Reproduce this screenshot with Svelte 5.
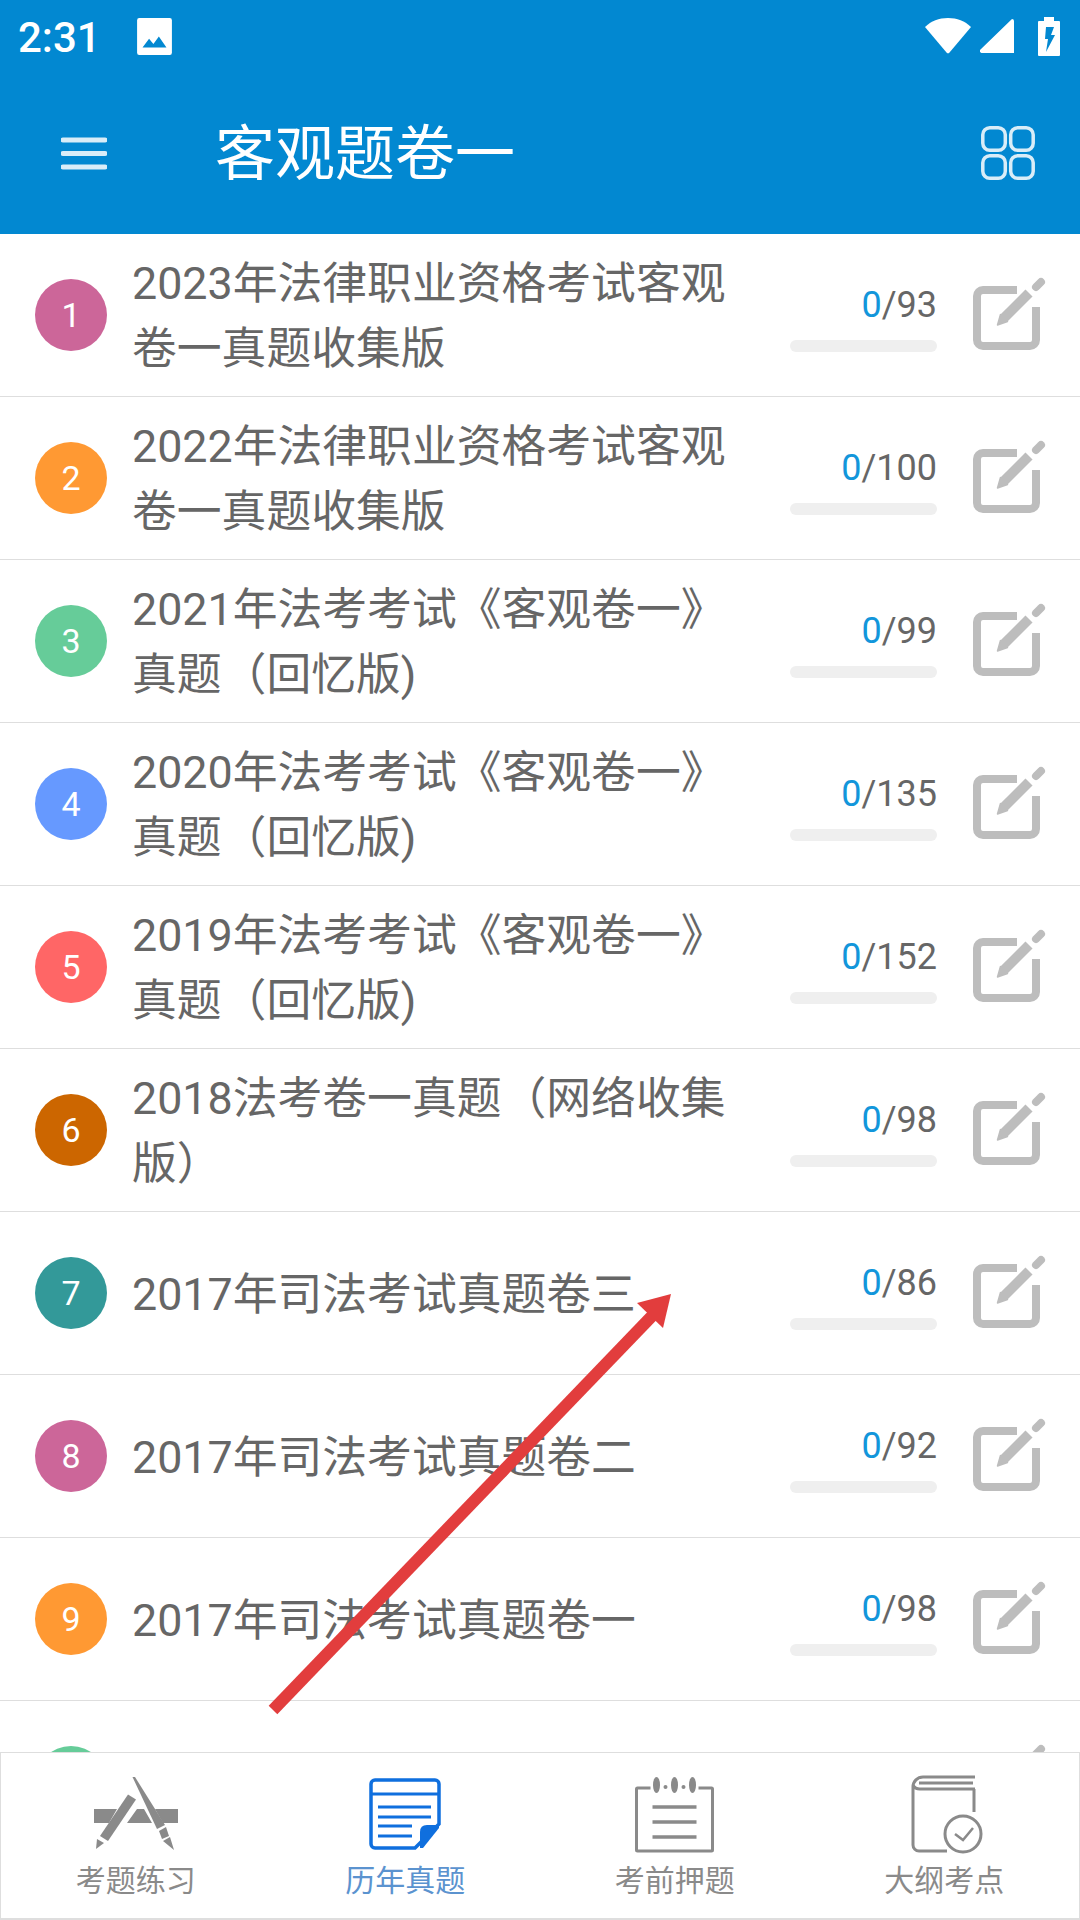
<script>
  const rows = [
    { t: '2023年法律职业资格考试客观卷一真题收集版', n: 93, c: '#cc6699' },
    { t: '2022年法律职业资格考试客观卷一真题收集版', n: 100, c: '#ff9933' },
    { t: '2021年法考考试《客观卷一》真题（回忆版)', n: 99, c: '#66cc99' },
    { t: '2020年法考考试《客观卷一》真题（回忆版)', n: 135, c: '#6699ff' },
    { t: '2019年法考考试《客观卷一》真题（回忆版)', n: 152, c: '#ff6666' },
    { t: '2018法考卷一真题（网络收集版）', n: 98, c: '#cc6600' },
    { t: '2017年司法考试真题卷三', n: 86, c: '#339999' },
    { t: '2017年司法考试真题卷二', n: 92, c: '#cc6699' },
    { t: '2017年司法考试真题卷一', n: 98, c: '#ff9933' },
    { t: '2016年司法考试真题卷一', n: 96, c: '#66cc99' }
  ];
</script>

<div class="page">
  <header class="head">
    <div class="status">
      <span class="time">2:31</span>
      <svg class="pic" viewBox="0 0 32 34" width="35" height="37">
        <path fill="#fff" d="M2 0h28a2 2 0 0 1 2 2v30a2 2 0 0 1-2 2H2a2 2 0 0 1-2-2V2a2 2 0 0 1 2-2z"/>
        <path fill="#0288d1" d="M5 27l6-8 4 5 5-7 7 10z"/>
      </svg>
      <span class="spacer"></span>
      <svg class="wifi" viewBox="0 0 46 36" width="46" height="36">
        <path fill="#fff" d="M0 9C6 3 14 0 23 0s17 3 23 9L24.500 34.500a2 2 0 0 1-3 0z"/>
      </svg>
      <svg class="signal" viewBox="0 0 34 34" width="34" height="34">
        <path fill="#fff" d="M32 0a2 2 0 0 1 2 2v32H2a2 2 0 0 1-1.500-3.500z"/>
      </svg>
      <svg class="battery" viewBox="0 0 22 39" width="22" height="39">
        <path fill="#fff" d="M6 0h10v4h5a1 1 0 0 1 1 1v33a1 1 0 0 1-1 1H1a1 1 0 0 1-1-1V5a1 1 0 0 1 1-1h5z"/>
        <path fill="#0288d1" d="M8 10h8l-3 8h4L8 35l2-13H7z"/>
      </svg>
    </div>
    <div class="bar">
      <svg class="menu" viewBox="0 0 46 33" width="46" height="33">
        <path d="M2 3h42M2 16.500h42M2 30h42" stroke="#fff" stroke-opacity=".85" stroke-width="5" stroke-linecap="round"/>
      </svg>
      <h1>客观题卷一</h1>
      <svg class="grid" viewBox="0 0 54 54" width="54" height="54" fill="none" stroke="#fff" stroke-opacity=".85" stroke-width="3.500">
        <rect x="1.800" y="1.800" width="22.500" height="22.500" rx="7"/>
        <rect x="29.700" y="1.800" width="22.500" height="22.500" rx="7"/>
        <rect x="1.800" y="29.700" width="22.500" height="22.500" rx="7"/>
        <rect x="29.700" y="29.700" width="22.500" height="22.500" rx="7"/>
      </svg>
    </div>
  </header>

  <main class="list">
    {#each rows as r, i}
      <div class="row">
        <span class="num" style="background:{r.c}">{i + 1}</span>
        <p class="title">{r.t}</p>
        <div class="stat">
          <div class="count"><span class="zero">0</span>/{r.n}</div>
          <div class="track"></div>
        </div>
        <svg class="edit" viewBox="0 0 74 74" width="74" height="74">
          <path d="M44 13H10a6 6 0 0 0-6 6v44a6 6 0 0 0 6 6h47a6 6 0 0 0 6-6V30" fill="none" stroke="#bdbdbd" stroke-width="8"/>
          <path d="M31 41L56 16" fill="none" stroke="#bdbdbd" stroke-width="10"/>
          <path d="M34.500 44.500L27.500 37.500L24.500 48z" fill="#bdbdbd" stroke="#bdbdbd" stroke-width="1.500" stroke-linejoin="round"/>
          <path d="M63 10L68 5" fill="none" stroke="#bdbdbd" stroke-width="8" stroke-linecap="round"/>
        </svg>
      </div>
    {/each}
  </main>

  <svg class="arrow" viewBox="0 0 420 430" width="420" height="430">
    <path d="M13 420L392 26" stroke="#e23d3d" stroke-width="12" fill="none"/>
    <path d="M411 4L377 13L403 38Z" fill="#e23d3d"/>
  </svg>

  <nav class="tabs">
    <div class="tab">
      <svg class="ico app" viewBox="0 0 84 76" width="84" height="76" fill="#8a8a8a">
        <path d="M0 32H23L15 46H0zM33 46L43 32H50L58 46zM61 32H84V46H69z"/>
        <path d="M34 17.500L42 22.500L14 64L6 59z"/>
        <path d="M3 62L10 66L2 72z"/>
        <path d="M38.500 0L41 0L71 48L63 52z"/>
        <path d="M65 54L72 50L75 59L68 62zM69 64L76 60L80 73z"/>
      </svg>
      <span>考题练习</span>
    </div>
    <div class="tab active">
      <svg class="ico doc" viewBox="0 0 72 72" width="72" height="72">
        <path d="M6 2H66a4 4 0 0 1 4 4V46L46 70H6a4 4 0 0 1-4-4V6a4 4 0 0 1 4-4z" fill="none" stroke="#0f6fde" stroke-width="3.500"/>
        <path d="M2 16h68M9 29h53M9 39h53M9 48h34M9 58h34" stroke="#0f6fde" stroke-width="3" fill="none"/>
        <path d="M70 47V50L54 70H51V54q0-7 7-7z" fill="#0f6fde"/>
      </svg>
      <span>历年真题</span>
    </div>
    <div class="tab">
      <svg class="ico note" viewBox="0 0 80 76" width="81" height="76">
        <path d="M16 11H3a1 1 0 0 0-1 1v61a1 1 0 0 0 1 1h74a1 1 0 0 0 1-1V12a1 1 0 0 0-1-1H64" fill="none" stroke="#8a8a8a" stroke-width="3"/>
        <path d="M18 30h44M18 45h44M18 60h44" stroke="#8a8a8a" stroke-width="3.500"/>
        <ellipse cx="22" cy="8" rx="3.500" ry="8" fill="#8a8a8a"/>
        <ellipse cx="40" cy="8" rx="3.500" ry="8" fill="#8a8a8a"/>
        <ellipse cx="58" cy="8" rx="3.500" ry="8" fill="#8a8a8a"/>
        <circle cx="31" cy="10" r="2" fill="#8a8a8a"/>
        <circle cx="49" cy="10" r="2" fill="#8a8a8a"/>
      </svg>
      <span>考前押题</span>
    </div>
    <div class="tab">
      <svg class="ico book" viewBox="0 0 72 80" width="72" height="80">
        <path d="M64 2H12a10 10 0 0 0-10 10V70a6 6 0 0 0 6 6H36M64 14H10a8 8 0 0 1-8-4M8 8H62M63 14V37" fill="none" stroke="#8a8a8a" stroke-width="3"/>
        <circle cx="52" cy="59" r="18" fill="#fff" stroke="#8a8a8a" stroke-width="3"/>
        <path d="M44 59L52 65L62 53" fill="none" stroke="#8a8a8a" stroke-width="2.500"/>
      </svg>
      <span>大纲考点</span>
    </div>
  </nav>
</div>

<style>
  :global(body) { margin: 0; background: #fff; }
  .page {
    position: relative;
    width: 1080px;
    height: 1920px;
    overflow: hidden;
    background: #fff;
    font-family: Roboto, "Noto Sans CJK SC", sans-serif;
  }
  .head { height: 234px; background: #0288d1; color: #fff; }
  .status {
    display: flex;
    align-items: center;
    height: 72px;
    padding: 0 20px 0 18px;
  }
  .time { font-size: 42px; font-weight: 500; line-height: 1; width: 119px; margin-top: 4px; }
  .spacer { flex: 1; }
  .wifi { margin-right: 9px; }
  .signal { margin-right: 24px; }
  .bar {
    display: flex;
    align-items: center;
    height: 162px;
    padding: 0 45px 0 61px;
  }
  h1 {
    flex: 1;
    margin: 4px 0 0 108px;
    font-size: 60px;
    font-weight: 400;
    line-height: 80px;
  }
  .list { display: flex; flex-direction: column; }
  .row {
    display: flex;
    align-items: center;
    height: 162px;
    padding: 0 0 0 35px;
    border-bottom: 1px solid #dedede;
    flex: none;
  }
  .num {
    flex: none;
    width: 72px;
    height: 72px;
    border-radius: 50%;
    color: #fff;
    font-size: 34px;
    line-height: 72px;
    text-align: center;
  }
  .title {
    width: 600px;
    margin: 2px 0 0 25px;
    color: #666;
    font-size: 44.800px;
    line-height: 65px;
    flex: none;
  }
  .stat {
    flex: none;
    width: 147px;
    margin-left: 58px;
    text-align: right;
  }
  .count {
    color: #666;
    font-size: 36px;
    line-height: 40px;
    margin: 6px 0 15px;
  }
  .zero { color: #1296db; }
  .track { height: 12px; border-radius: 6px; background: #efefef; }
  .edit { flex: none; margin-left: 36px; margin-top: -2px; }
  .arrow { position: absolute; left: 260px; top: 1290px; }
  .tabs {
    position: absolute;
    left: 0;
    right: 0;
    bottom: 0;
    height: 168px;
    box-sizing: border-box;
    display: grid;
    grid-template-columns: repeat(4, 1fr);
    background: #fff;
    border: 1px solid #dedede;
    border-bottom-width: 2px;
  }
  .tab {
    display: flex;
    flex-direction: column;
    align-items: center;
    color: #8a8a8a;
    font-size: 30px;
    line-height: 40px;
  }
  .ico { margin-top: 24px; margin-bottom: auto; }
  .doc { margin-top: 25px; }
  .book { margin-top: 22px; margin-left: 6px; }
  .tab span { margin-bottom: 17px; }
  .tab.active { color: #5b93cf; }
</style>
